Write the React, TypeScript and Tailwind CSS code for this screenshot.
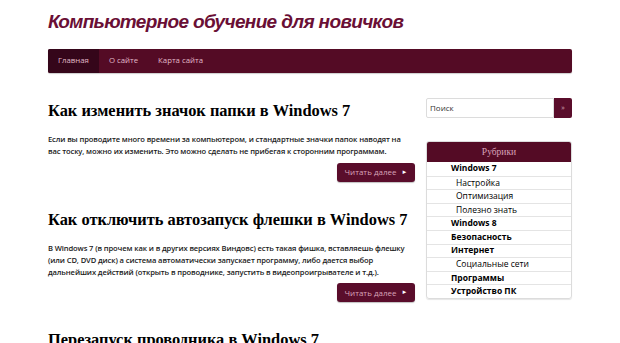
interface Post {
  title: string;
  text: string;
}

const posts: Post[] = [
  {
    title: 'Как изменить значок папки в Windows 7',
    text: 'Если вы проводите много времени за компьютером, и стандартные значки папок наводят на вас тоску, можно их изменить. Это можно сделать не прибегая к сторонним программам.',
  },
  {
    title: 'Как отключить автозапуск флешки в Windows 7',
    text: 'В Windows 7 (в прочем как и в других версиях Виндовс) есть такая фишка, вставляешь флешку (или CD, DVD диск) а система автоматически запускает программу, либо дается выбор дальнейших действий (открыть в проводнике, запустить в видеопроигрывателе и т.д.).',
  },
  {
    title: 'Перезапуск проводника в Windows 7',
    text: '',
  },
];

const categories = [
  { name: 'Windows 7', sub: false },
  { name: 'Настройка', sub: true },
  { name: 'Оптимизация', sub: true },
  { name: 'Полезно знать', sub: true },
  { name: 'Windows 8', sub: false },
  { name: 'Безопасность', sub: false },
  { name: 'Интернет', sub: false },
  { name: 'Социальные сети', sub: true },
  { name: 'Программы', sub: false },
  { name: 'Устройство ПК', sub: false },
];

const menu = ['Главная', 'О сайте', 'Карта сайта'];

export default function App() {
  return (
    <div className="h-[343px] w-[620px] overflow-hidden bg-white font-['Open_Sans',sans-serif]">
      <div className="mx-auto w-[524px]">
        {/* Header */}
        <div className="pt-[11px] pb-[16px]">
          <h1 className="font-['Liberation_Sans',sans-serif] text-[19px] font-bold italic leading-[22px] tracking-[-0.65px] text-[#6a0f35]">
            Компьютерное обучение для новичков
          </h1>
        </div>

        {/* Nav */}
        <nav className="flex h-[24px] overflow-hidden rounded-[2px] bg-[#540b25] shadow-[0_1px_1px_rgba(0,0,0,0.2)]">
          {menu.map((item, i) => (
            <a
              key={item}
              className={`flex items-center px-[10px] text-[7.8px] text-[#e0b9c8] ${i === 0 ? 'bg-[#35061a]' : ''}`}
            >
              {item}
            </a>
          ))}
        </nav>

        <div className="mt-[27px] flex gap-[11px]">
          {/* Posts */}
          <main className="w-[367px]">
            {posts.map((post, i) => (
              <article key={i} className="mb-[27px]">
                <h2 className="font-['Liberation_Serif',serif] text-[16.4px] font-bold leading-[22px] text-black">
                  {post.title}
                </h2>
                {post.text && (
                  <>
                    <p className="mt-[11px] max-w-[361px] text-[7.6px] font-semibold leading-[12.3px] tracking-[-0.12px] text-[#1a1a1a]">
                      {post.text}
                    </p>
                    <div className="mt-[5px] flex justify-end">
                      <a className="flex h-[19px] w-[78px] items-center justify-center gap-[5px] rounded-[3px] bg-[#5a0d2b] text-[8px] text-[#d9a3ba] shadow-[0_1px_1px_rgba(0,0,0,0.25)]">
                        Читать далее
                        <span className="text-[6px] text-white">►</span>
                      </a>
                    </div>
                  </>
                )}
              </article>
            ))}
          </main>

          {/* Sidebar */}
          <aside className="-mt-[2px] w-[146px]">
            <div className="flex h-[20px]">
              <div className="flex flex-1 items-center rounded-l-[2px] border border-[#dcdcdc] bg-white px-[3px] text-[8px] text-[#333]">
                Поиск
              </div>
              <button className="flex w-[18px] items-center justify-center rounded-r-[2px] bg-[#5a0d2b] text-[7px] text-[#d9a3ba]">
                »
              </button>
            </div>

            <div className="mt-[23px] overflow-hidden rounded-[3px] border border-[#dcdcdc] shadow-[0_1px_1px_rgba(0,0,0,0.1)]">
              <div className="flex h-[20px] items-center justify-center bg-[#540b25] font-['Liberation_Serif',serif] text-[9.5px] text-[#d9a3ba]">
                Рубрики
              </div>
              <ul>
                {categories.map((c, i) => (
                  <li
                    key={c.name}
                    className={`flex h-[13.6px] items-center text-[8.5px] text-black ${i > 0 ? 'border-t border-[#e4e4e4]' : ''} ${c.sub ? 'pl-[29px] font-normal text-[#222]' : 'pl-[24px] font-bold'}`}
                  >
                    {c.name}
                  </li>
                ))}
              </ul>
            </div>
          </aside>
        </div>
      </div>
    </div>
  );
}
